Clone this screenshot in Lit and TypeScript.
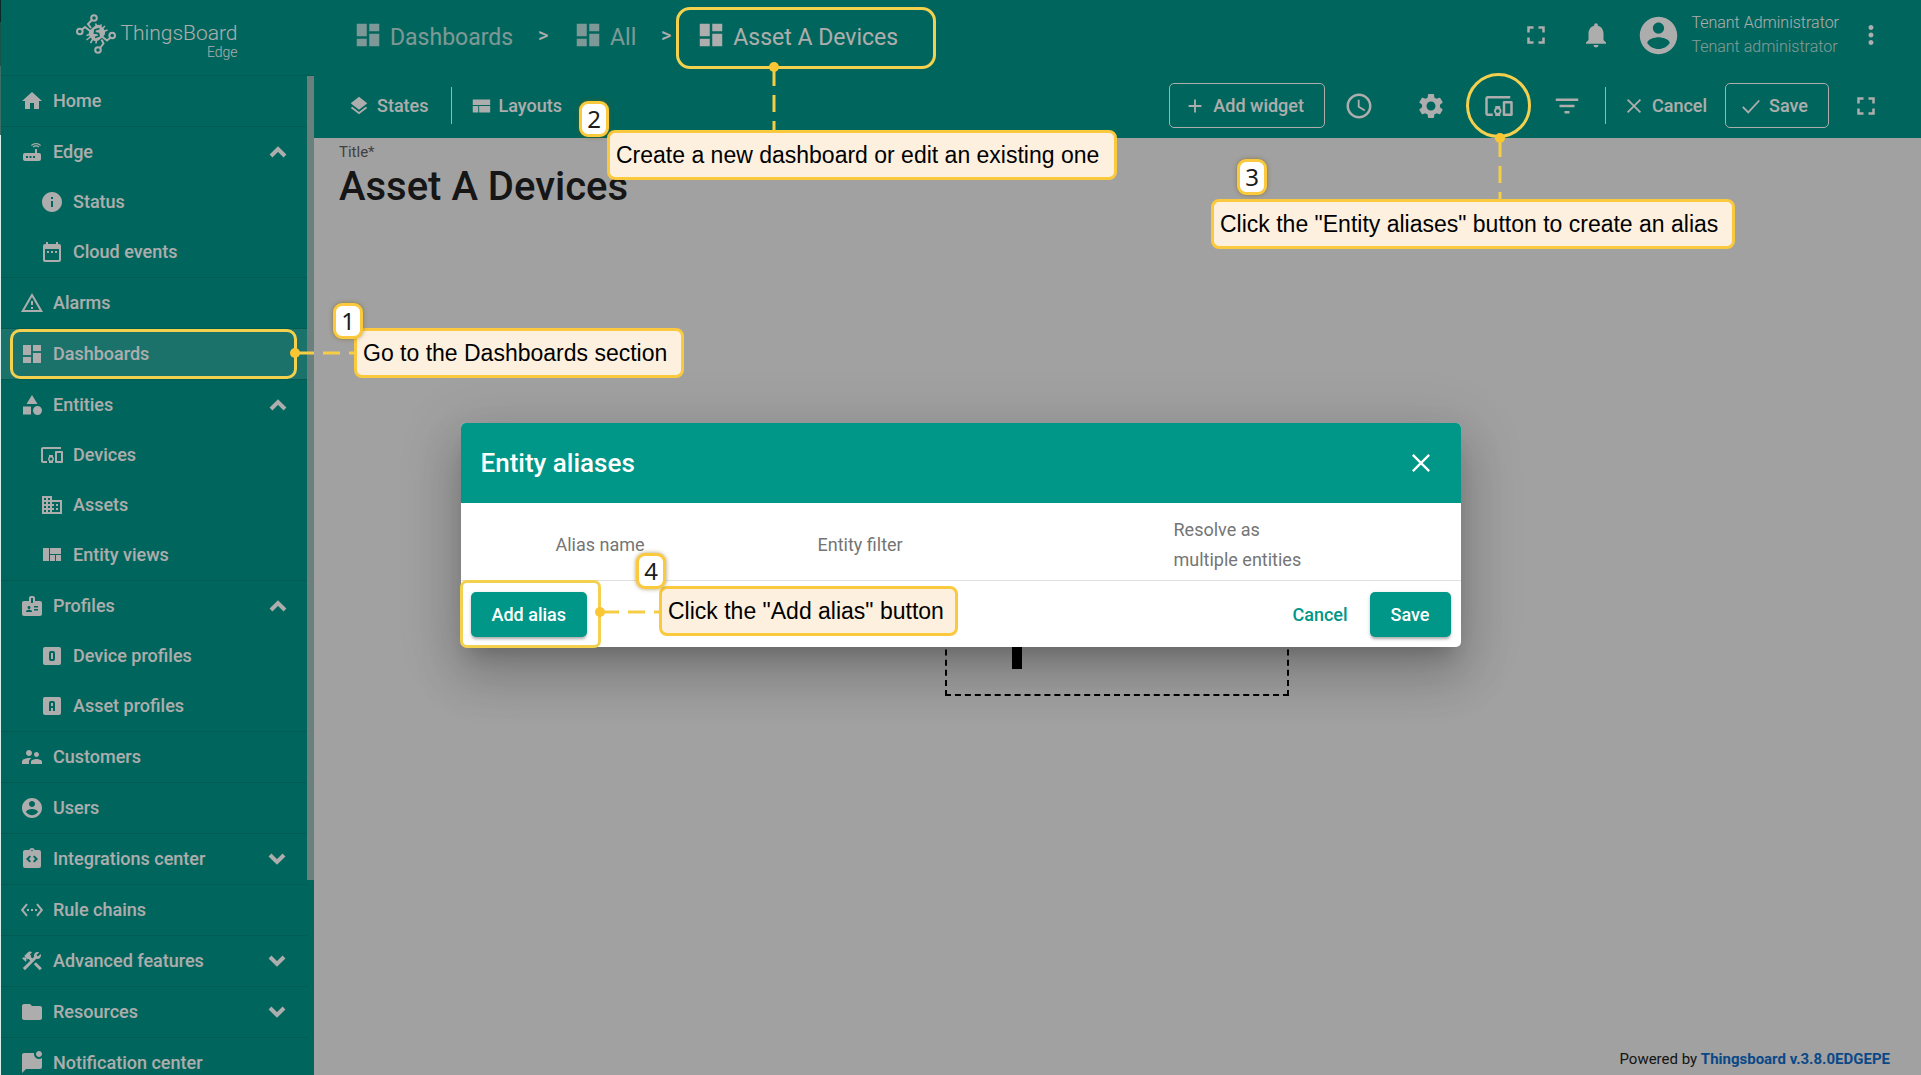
import { LitElement, html, svg, css, nothing } from "lit";
import { customElement, property } from "lit/decorators.js";
import { styleMap } from "lit/directives/style-map.js";

const stroke = (d: string, w = 2) =>
  svg`<path d=${d} fill="none" stroke="currentColor" stroke-width=${w} />`;
const fill = (d: string) => svg`<path d=${d} fill="currentColor" fill-rule="evenodd" />`;

const BOX = "M5 3h14a2 2 0 0 1 2 2v14a2 2 0 0 1-2 2H5a2 2 0 0 1-2-2V5a2 2 0 0 1 2-2z";

const ICONS: Record<string, unknown> = {
  home: fill("M10 20v-6h4v6h5v-8h3L12 3 2 12h3v8z"),
  router: fill("M20.2 5.9l.8-.8C19.6 3.7 17.8 3 16 3s-3.6.7-5 2.1l.8.8C13 4.8 14.5 4.2 16 4.2s3 .6 4.2 1.7zm-.9.8c-.9-.9-2.1-1.4-3.3-1.4s-2.4.5-3.3 1.4l.8.8c.7-.7 1.6-1 2.5-1 .9 0 1.8.3 2.5 1l.8-.8zM19 13h-2V9h-2v4H5c-1.1 0-2 .9-2 2v4c0 1.1.9 2 2 2h14c1.1 0 2-.9 2-2v-4c0-1.1-.9-2-2-2zM8 18H6v-2h2v2zm3.5 0h-2v-2h2v2zm3.5 0h-2v-2h2v2z"),
  info: fill("M12 2C6.48 2 2 6.48 2 12s4.48 10 10 10 10-4.48 10-10S17.52 2 12 2zm1 15h-2v-6h2v6zm0-8h-2V7h2v2z"),
  date: fill("M9 11H7v2h2v-2zm4 0h-2v2h2v-2zm4 0h-2v2h2v-2zm2-7h-1V2h-2v2H8V2H6v2H5c-1.11 0-1.99.9-1.99 2L3 20c0 1.1.89 2 2 2h14c1.1 0 2-.9 2-2V6c0-1.1-.9-2-2-2zm0 16H5V9h14v11z"),
  alarm: fill("M12 5.99L19.53 19H4.47L12 5.99M12 2L1 21h22L12 2zm1 14h-2v2h2v-2zm0-6h-2v4h2v-4z"),
  dashboard: fill("M3 13h8V3H3v10zm0 8h8v-6H3v6zm10 0h8V11h-8v10zm0-18v6h8V3h-8z"),
  category: fill("M12 2l-5.5 9h11zM17.5 13a4.5 4.5 0 1 0 0 9 4.5 4.5 0 0 0 0-9zM3 13.5h8v8H3z"),
  devices: fill("M3 6h18V4H3c-1.1 0-2 .9-2 2v12c0 1.1.9 2 2 2h4v-2H3V6zm10 6H9v1.78c-.61.55-1 1.33-1 2.22s.39 1.67 1 2.22V20h4v-1.78c.61-.55 1-1.34 1-2.22s-.39-1.67-1-2.22V12zm-2 5.5c-.83 0-1.5-.67-1.5-1.5s.67-1.5 1.5-1.5 1.5.67 1.5 1.5-.67 1.5-1.5 1.5zM22 8h-6c-.5 0-1 .5-1 1v10c0 .5.5 1 1 1h6c.5 0 1-.5 1-1V9c0-.5-.5-1-1-1zm-1 10h-4v-8h4v8z"),
  domain: fill("M12 7V3H2v18h20V7H12zM6 19H4v-2h2v2zm0-4H4v-2h2v2zm0-4H4V9h2v2zm0-4H4V5h2v2zm4 12H8v-2h2v2zm0-4H8v-2h2v2zm0-4H8V9h2v2zm0-4H8V5h2v2zm10 12h-8v-2h2v-2h-2v-2h2v-2h-2V9h8v10zm-2-8h-2v2h2v-2zm0 4h-2v2h2v-2z"),
  quilt: fill("M10 18h5v-6h-5v6zm-7 0h6V5H3v13zm13 0h5v-6h-5v6zM10 5v6h11V5H10z"),
  layout: fill("M3 19h6v-7H3v7zm7 0h12v-7H10v7zM3 5v6h19V5H3z"),
  badge: fill("M20 7h-5V4c0-1.1-.9-2-2-2h-2c-1.1 0-2 .9-2 2v3H4c-1.1 0-2 .9-2 2v11c0 1.1.9 2 2 2h16c1.1 0 2-.9 2-2V9c0-1.1-.9-2-2-2zM9 12c.83 0 1.5.67 1.5 1.5S9.83 15 9 15s-1.5-.67-1.5-1.5S8.17 12 9 12zm3 6H6v-.75c0-1 2-1.5 3-1.5s3 .5 3 1.5V18zm1-9h-2V4h2v5zm5 7.5h-4V15h4v1.5zm0-3h-4V12h4v1.5z"),
  deviceProfile: svg`${fill(BOX)}<rect x="10" y="8" width="4" height="8" rx="1" fill="none" stroke="#009688" stroke-width="2" />`,
  assetProfile: svg`${fill(BOX)}<path d="M10 17V9a1 1 0 0 1 1-1h2a1 1 0 0 1 1 1v8M10 13h4" fill="none" stroke="#009688" stroke-width="2" />`,
  customers: fill("M16.5 12c1.38 0 2.49-1.12 2.49-2.5S17.88 7 16.5 7C15.12 7 14 8.12 14 9.5s1.12 2.5 2.5 2.5zM9 11c1.66 0 2.99-1.34 2.99-3S10.66 5 9 5C7.34 5 6 6.34 6 8s1.34 3 3 3zm7.5 3c-1.83 0-5.5.92-5.5 2.75V19h11v-2.25c0-1.83-3.67-2.75-5.5-2.75zM9 13c-2.33 0-7 1.17-7 3.5V19h7v-2.25c0-.85.33-2.34 2.37-3.47C10.5 13.1 9.66 13 9 13z"),
  account: fill("M12 2C6.48 2 2 6.48 2 12s4.48 10 10 10 10-4.48 10-10S17.52 2 12 2zm0 3c1.66 0 3 1.34 3 3s-1.34 3-3 3-3-1.34-3-3 1.34-3 3-3zm0 14.2c-2.5 0-4.71-1.28-6-3.22.03-1.99 4-3.08 6-3.08 1.99 0 5.97 1.09 6 3.08-1.29 1.94-3.5 3.22-6 3.22z"),
  integration: fill("M19 3h-4.18C14.4 1.84 13.3 1 12 1s-2.4.84-2.82 2H5c-1.1 0-2 .9-2 2v14c0 1.1.9 2 2 2h14c1.1 0 2-.9 2-2V5c0-1.1-.9-2-2-2zm-8 11.17l-1.41 1.42L6 12l3.59-3.59L11 9.83 8.83 12 11 14.17zm1-9.92c-.41 0-.75-.34-.75-.75s.34-.75.75-.75.75.34.75.75-.34.75-.75.75zm2.41 11.34L13 14.17 15.17 12 13 9.83l1.41-1.42L18 12l-3.59 3.59z"),
  ethernet: fill("M7.77 6.76L6.23 5.48.82 12l5.41 6.52 1.54-1.28L3.42 12l4.35-5.24zM7 13h2v-2H7v2zm10-2h-2v2h2v-2zm-6 2h2v-2h-2v2zm6.77-7.52l-1.54 1.28L20.58 12l-4.35 5.24 1.54 1.28L23.18 12l-5.41-6.52z"),
  tools: fill("M13.78 15.3l6 6 2.11-2.16-6-6zM17.5 10c1.93 0 3.5-1.57 3.5-3.5 0-.58-.16-1.12-.41-1.6l-2.7 2.7-1.49-1.49 2.7-2.7c-.48-.25-1.02-.41-1.6-.41C15.57 3 14 4.57 14 6.5c0 .41.08.8.21 1.16l-1.85 1.85-1.78-1.78.71-.71-1.41-1.41L12 3.49c-1.17-1.17-3.07-1.17-4.24 0L4.22 7.03l1.41 1.41H2.81l-.71.71 3.54 3.54.71-.71V9.15l1.41 1.41.71-.71 1.78 1.78-7.41 7.41 2.12 2.12L16.34 9.79c.36.13.75.21 1.16.21z"),
  folder: fill("M10 4H4c-1.1 0-1.99.9-1.99 2L2 18c0 1.1.9 2 2 2h16c1.1 0 2-.9 2-2V8c0-1.1-.9-2-2-2h-8l-2-2z"),
  chat: fill("M22 6.98V16c0 1.1-.9 2-2 2H6l-4 4V4c0-1.1.9-2 2-2h10.1c-.06.32-.1.66-.1 1 0 2.76 2.24 5 5 5 1.13 0 2.16-.39 3-1.02zM16 3c0 1.66 1.34 3 3 3s3-1.34 3-3-1.34-3-3-3-3 1.34-3 3z"),
  up: stroke("M5 16l7-7 7 7", 4),
  down: stroke("M4 8l7 7 7-7", 4),
  layers: fill("M11.99 18.54l-7.37-5.73L3 14.07l9 7 9-7-1.63-1.27-7.38 5.74zM12 16l7.36-5.73L21 9l-9-7-9 7 1.63 1.27L12 16z"),
  fullscreen: fill("M7 14H5v5h5v-2H7v-3zm-2-4h2V7h3V5H5v5zm12 7h-3v2h5v-5h-2v3zM14 5v2h3v3h2V5h-5z"),
  bell: fill("M12 22c1.1 0 2-.9 2-2h-4c0 1.1.89 2 2 2zm6-6v-5c0-3.07-1.64-5.64-4.5-6.32V4c0-.83-.67-1.5-1.5-1.5s-1.5.67-1.5 1.5v.68C7.63 5.36 6 7.92 6 11v5l-2 2v1h16v-1l-2-2z"),
  more: fill("M12 8c1.1 0 2-.9 2-2s-.9-2-2-2-2 .9-2 2 .9 2 2 2zm0 2c-1.1 0-2 .9-2 2s.9 2 2 2 2-.9 2-2-.9-2-2-2zm0 6c-1.1 0-2 .9-2 2s.9 2 2 2 2-.9 2-2-.9-2-2-2z"),
  clock: fill("M11.99 2C6.47 2 2 6.48 2 12s4.47 10 9.99 10C17.52 22 22 17.52 22 12S17.52 2 11.99 2zM12 20c-4.42 0-8-3.58-8-8s3.58-8 8-8 8 3.58 8 8-3.58 8-8 8zm.5-13H11v6l5.25 3.15.75-1.23-4.5-2.67z"),
  gear: fill("M19.14 12.94c.04-.3.06-.61.06-.94 0-.32-.02-.64-.07-.94l2.03-1.58c.18-.14.23-.41.12-.61l-1.92-3.32c-.12-.22-.37-.29-.59-.22l-2.39.96c-.5-.38-1.03-.7-1.62-.94l-.36-2.54c-.04-.24-.24-.41-.48-.41h-3.84c-.24 0-.43.17-.47.41l-.36 2.54c-.59.24-1.13.57-1.62.94l-2.39-.96c-.22-.08-.47 0-.59.22L2.74 8.87c-.12.21-.08.47.12.61l2.03 1.58c-.05.3-.09.63-.09.94s.02.64.07.94l-2.03 1.58c-.18.14-.23.41-.12.61l1.92 3.32c.12.22.37.29.59.22l2.39-.96c.5.38 1.03.7 1.62.94l.36 2.54c.05.24.24.41.48.41h3.84c.24 0 .44-.17.47-.41l.36-2.54c.59-.24 1.13-.56 1.62-.94l2.39.96c.22.08.47 0 .59-.22l1.92-3.32c.12-.22.07-.47-.12-.61l-2.01-1.58zM12 15.6c-1.98 0-3.6-1.62-3.6-3.6s1.62-3.6 3.6-3.6 3.6 1.62 3.6 3.6-1.62 3.6-3.6 3.6z"),
  filter: fill("M10 18h4v-2h-4v2zM3 6v2h18V6H3zm3 7h12v-2H6v2z"),
  plus: stroke("M12 5v14M5 12h14", 2),
  close: stroke("M5 5l14 14M19 5L5 19", 2),
  check: stroke("M3 13l6 6L21 6", 2),
};

@customElement("tb-icon")
class TbIcon extends LitElement {
  @property() name = "";
  static styles = css`
    :host { display: inline-flex; flex: none; width: 24px; height: 24px; }
    .glyph { width: 100%; height: 100%; display: block; }
  `;
  render() {
    return html`<svg class="glyph" viewBox="0 0 24 24" aria-hidden="true">${ICONS[this.name] ?? nothing}</svg>`;
  }
}

interface Item { label: string; icon: string; active?: boolean; toggle?: "up" | "down"; children?: Item[]; }

const MENU: Item[] = [
  { label: "Home", icon: "home" },
  { label: "Edge", icon: "router", toggle: "up", children: [
    { label: "Status", icon: "info" },
    { label: "Cloud events", icon: "date" },
  ] },
  { label: "Alarms", icon: "alarm" },
  { label: "Dashboards", icon: "dashboard", active: true },
  { label: "Entities", icon: "category", toggle: "up", children: [
    { label: "Devices", icon: "devices" },
    { label: "Assets", icon: "domain" },
    { label: "Entity views", icon: "quilt" },
  ] },
  { label: "Profiles", icon: "badge", toggle: "up", children: [
    { label: "Device profiles", icon: "deviceProfile" },
    { label: "Asset profiles", icon: "assetProfile" },
  ] },
  { label: "Customers", icon: "customers" },
  { label: "Users", icon: "account" },
  { label: "Integrations center", icon: "integration", toggle: "down" },
  { label: "Rule chains", icon: "ethernet" },
  { label: "Advanced features", icon: "tools", toggle: "down" },
  { label: "Resources", icon: "folder", toggle: "down" },
  { label: "Notification center", icon: "chat" },
];

@customElement("tb-sidebar")
class TbSidebar extends LitElement {
  static styles = css`
    :host { display: flex; flex-direction: column; width: 314px; flex: none; background: #009688; color: #fff; overflow: hidden; }
    .brand { flex: none; height: 76px; box-sizing: border-box; border-bottom: 1px solid #00867a; display: flex; align-items: center; justify-content: center; gap: 4px; padding-bottom: 8px; }
    .mark { width: 40px; height: 40px; flex: none; }
    .name { display: flex; flex-direction: column; align-items: flex-end; font-weight: 300; padding-top: 12px; }
    .big { font-size: 21px; line-height: 24px; }
    .small { font-size: 14px; line-height: 14px; }
    .body { flex: 1; min-height: 0; display: flex; overflow: hidden; }
    .list { flex: 1; margin: 0; padding: 0; list-style: none; }
    .sub { margin: 0; padding: 0; list-style: none; }
    .group { border-bottom: 1px solid #00867a; }
    .row { box-sizing: border-box; width: 100%; height: 50px; display: flex; align-items: center; gap: 9px; padding: 0 17px 0 20px; border: 0; background: none; color: inherit; font: 500 18px/24px Roboto, sans-serif; text-align: left; text-decoration: none; }
    .child { padding-left: 40px; }
    .active { background: #28a99d; }
    .text { flex: 1; }
    .bar { width: 7px; flex: none; }
    .thumb { height: 804px; max-height: 100%; background: #9cbdb9; }
  `;
  row(i: Item, child = false) {
    const cls = `row ${child ? "child" : ""} ${i.active ? "active" : ""}`;
    const inner = html`<tb-icon name=${i.icon}></tb-icon><span class="text">${i.label}</span>`;
    return i.toggle
      ? html`<button class=${cls} aria-expanded=${i.toggle === "up"}>${inner}<tb-icon name=${i.toggle}></tb-icon></button>`
      : html`<a class=${cls} href="#">${inner}</a>`;
  }
  render() {
    return html`
      <div class="brand">
        <svg class="mark" viewBox="0 0 40 40" fill="none" stroke="#fff" stroke-width="2" aria-hidden="true">
          <circle cx="18" cy="4" r="2.800" /><circle cx="3.800" cy="17.500" r="2.800" />
          <circle cx="36.200" cy="21.500" r="2.800" /><circle cx="22" cy="36" r="2.800" />
          <path d="M16 6l-4 4 3 4M6 15.500l3-2.500 5 4M24.500 33.500l3-4-2-4M34 24l-3 2.500-5-4" />
          <path d="M19.500 9.500l1.500 3M25.500 10.500l-2 3M29 12l-4 4M31.500 16l-4 1.500M10.500 21.500l4-1.500M10.500 26l5-4M14.500 29l3-5M20 29.500l.5-4" stroke-width="1.600" />
          <rect x="13.200" y="12.200" width="15.500" height="13.500" rx="5" transform="rotate(-42 21 19)" fill="#fff" stroke="none" />
          <path d="M23.500 14.500l-4.500 1.500-.5 3 4 .5.500 2.500-4 1.500" stroke="#009688" stroke-width="1.800" />
        </svg>
        <div class="name"><span class="big">ThingsBoard</span><span class="small">Edge</span></div>
      </div>
      <div class="body">
        <ul class="list">
          ${MENU.map((i) => html`<li class="group">${this.row(i)}
            ${i.children ? html`<ul class="sub">${i.children.map((c) => html`<li>${this.row(c, true)}</li>`)}</ul>` : nothing}
          </li>`)}
        </ul>
        <div class="bar"><div class="thumb"></div></div>
      </div>`;
  }
}

@customElement("tb-header")
class TbHeader extends LitElement {
  static styles = css`
    :host { display: block; background: #009688; color: #fff; }
    .top { height: 75px; display: flex; align-items: center; padding: 0 20px 5px 39px; box-sizing: border-box; }
    .crumbs { display: flex; align-items: center; flex: 1; margin: 0; padding: 0; list-style: none; font-size: 23px; line-height: 24px; }
    .crumb { display: flex; align-items: center; gap: 7px; color: inherit; text-decoration: none; opacity: 0.72; }
    .crumb tb-icon { width: 30px; height: 30px; }
    .crumb span { padding-top: 6px; }
    .current { opacity: 1; }
    .sep { width: 60px; text-align: center; font-size: 20px; line-height: 24px; font-weight: 500; }
    .icon { border: 0; background: none; color: inherit; padding: 0; width: 60px; display: flex; justify-content: center; }
    .icon tb-icon { width: 30px; height: 30px; }
    .user { display: flex; align-items: center; gap: 10px; padding-left: 10px; font-weight: 300; font-size: 16px; line-height: 24px; }
    .avatar { width: 45px; height: 45px; }
    .names { padding-right: 2px; }
    .role { opacity: 0.75; }
    .tools { height: 63px; display: flex; align-items: center; padding: 0 32px 2px 34px; box-sizing: border-box; }
    .tool { display: flex; align-items: center; gap: 7px; border: 0; background: none; color: inherit; font: 500 18px/24px Roboto, sans-serif; padding: 0; height: 45px; }
    .tool tb-icon { width: 22px; height: 22px; }
    .outlined { border: 1px solid #fff; border-radius: 5px; padding: 0 20px 0 14px; }
    .line { width: 1px; height: 37px; background: #fff; }
    .left { display: flex; align-items: center; gap: 18px; flex: 1; }
    .right { display: flex; align-items: center; }
    .right .icon { width: 68px; }
    .gap { margin-right: 4px; }
    .right .cancel { padding: 0 18px 0 17px; }
    .right .end { width: 60px; padding-left: 14px; }
  `;
  render() {
    return html`
      <div class="top">
        <nav class="crumbs">
          <a class="crumb" href="#"><tb-icon name="dashboard"></tb-icon><span>Dashboards</span></a>
          <div class="sep">&gt;</div>
          <a class="crumb" href="#"><tb-icon name="dashboard"></tb-icon><span>All</span></a>
          <div class="sep">&gt;</div>
          <a class="crumb current" href="#"><tb-icon name="dashboard"></tb-icon><span>Asset A Devices</span></a>
        </nav>
        <button class="icon" aria-label="Fullscreen"><tb-icon name="fullscreen"></tb-icon></button>
        <button class="icon" aria-label="Notifications"><tb-icon name="bell"></tb-icon></button>
        <div class="user">
          <tb-icon class="avatar" name="account"></tb-icon>
          <div class="names"><div>Tenant Administrator</div><div class="role">Tenant administrator</div></div>
        </div>
        <button class="icon" aria-label="User menu"><tb-icon name="more"></tb-icon></button>
      </div>
      <div class="tools">
        <div class="left">
          <button class="tool gap"><tb-icon name="layers"></tb-icon>States</button>
          <span class="line"></span>
          <button class="tool"><tb-icon name="layout"></tb-icon>Layouts</button>
        </div>
        <div class="right">
          <button class="tool outlined"><tb-icon name="plus"></tb-icon>Add widget</button>
          <button class="icon gap" aria-label="Time window"><tb-icon name="clock"></tb-icon></button>
          <button class="icon" aria-label="Settings"><tb-icon name="gear"></tb-icon></button>
          <button class="icon" aria-label="Entity aliases"><tb-icon name="devices"></tb-icon></button>
          <button class="icon gap" aria-label="Filters"><tb-icon name="filter"></tb-icon></button>
          <span class="line"></span>
          <button class="tool cancel"><tb-icon name="close"></tb-icon>Cancel</button>
          <button class="tool outlined"><tb-icon name="check"></tb-icon>Save</button>
          <button class="icon end" aria-label="Expand"><tb-icon name="fullscreen"></tb-icon></button>
        </div>
      </div>`;
  }
}

@customElement("tb-alias-dialog")
class TbAliasDialog extends LitElement {
  static styles = css`
    :host { display: block; width: 1000px; max-width: 90%; background: #fff; border-radius: 5px; box-shadow: 0 14px 19px -9px rgba(0, 0, 0, 0.2), 0 30px 48px 4px rgba(0, 0, 0, 0.14), 0 11px 58px 10px rgba(0, 0, 0, 0.12); }
    .head { height: 80px; box-sizing: border-box; padding: 0 26px 0 20px; display: flex; align-items: center; justify-content: space-between; background: #009688; color: #fff; border-radius: 5px 5px 0 0; }
    .title { margin: 0; font-size: 26px; line-height: 32px; font-weight: 500; }
    .close { border: 0; background: none; color: inherit; padding: 0; display: flex; }
    .close tb-icon { width: 28px; height: 28px; }
    .grid { width: 100%; border-collapse: collapse; table-layout: fixed; }
    .grid th { height: 77px; box-sizing: border-box; padding: 6px 0 0; text-align: left; vertical-align: middle; font-weight: 400; font-size: 18px; line-height: 30px; color: #757575; }
    .c1 { width: 95px; }
    .c2 { width: 262px; }
    .c3 { width: 356px; }
    .narrow { display: block; width: 150px; }
    .foot { border-top: 1px solid #e0e0e0; padding: 11px 10px 10px; display: flex; align-items: center; gap: 6px; }
    .btn { height: 45px; padding: 0 21px; border: 0; border-radius: 5px; background: #009688; color: #fff; font: 500 18px/24px Roboto, sans-serif; box-shadow: 0 3px 3px -1px rgba(0, 0, 0, 0.25), 0 1px 4px rgba(0, 0, 0, 0.15); }
    .flat { background: none; color: #009688; box-shadow: none; padding: 0 16px; margin-left: auto; }
  `;
  render() {
    return html`
      <div class="head">
        <h2 class="title">Entity aliases</h2>
        <button class="close" aria-label="Close"><tb-icon name="close"></tb-icon></button>
      </div>
      <table class="grid">
        <colgroup><col class="c1" /><col class="c2" /><col class="c3" /><col /></colgroup>
        <thead><tr><td></td><th>Alias name</th><th>Entity filter</th><th><span class="narrow">Resolve as multiple entities</span></th></tr></thead>
      </table>
      <div class="foot">
        <button class="btn">Add alias</button>
        <button class="btn flat">Cancel</button>
        <button class="btn">Save</button>
      </div>`;
  }
}

type Box = [number, number, number, number];
interface Step { n: number; text: string; badge: Box; note: Box; ring: Box; radius: number; dot: [number, number]; end: [number, number]; }

const STEPS: Step[] = [
  { n: 1, text: "Go to the Dashboards section", badge: [333, 303, 30, 36], note: [354, 328, 330, 50], ring: [10, 329, 287, 50], radius: 10, dot: [295, 353], end: [355, 353] },
  { n: 2, text: "Create a new dashboard or edit an existing one", badge: [579, 101, 30, 36], note: [607, 130, 510, 50], ring: [676, 7, 260, 62], radius: 14, dot: [774, 67], end: [774, 131] },
  { n: 3, text: "Click the \"Entity aliases\" button to create an alias", badge: [1237, 159, 30, 36], note: [1211, 199, 524, 50], ring: [1466, 73, 65, 65], radius: 33, dot: [1500, 138], end: [1500, 200] },
  { n: 4, text: "Click the \"Add alias\" button", badge: [636, 553, 30, 36], note: [659, 586, 299, 50], ring: [460, 580, 141, 68], radius: 7, dot: [600, 612], end: [660, 612] },
];

const place = ([x, y, w, h]: Box, extra = {}) =>
  styleMap({ left: `${x}px`, top: `${y}px`, width: `${w}px`, height: `${h}px`, ...extra });

@customElement("tb-guide")
class TbGuide extends LitElement {
  static styles = css`
    :host { display: block; position: absolute; inset: 0; pointer-events: none; }
    .ring, .note, .badge { position: absolute; box-sizing: border-box; border: 3px solid #fbc93d; }
    .ring { border-color: #f3d14f; }
    .note { border-radius: 8px; background: #fdf0df; color: #000; display: flex; align-items: center; padding: 0 0 0 6px; font: 400 23px/28px "Liberation Sans", sans-serif; white-space: nowrap; }
    .badge { border-radius: 9px; background: #fff; color: #1c1c1c; display: flex; align-items: center; justify-content: center; font: 400 24px/28px "Noto Sans", sans-serif; box-shadow: 0 0 4px rgba(120, 90, 0, 0.6); }
    .wires { position: absolute; inset: 0; width: 100%; height: 100%; }
  `;
  render() {
    return html`
      ${STEPS.map((s) => html`<div class="ring" style=${place(s.ring, { borderRadius: `${s.radius}px` })}></div>`)}
      <svg class="wires" aria-hidden="true">
        ${STEPS.map((s) => svg`
          <line x1=${s.dot[0]} y1=${s.dot[1]} x2=${s.end[0]} y2=${s.end[1]} stroke="#f6ce46" stroke-width="3" stroke-dasharray="17 9" stroke-dashoffset="-2" />
          <circle cx=${s.dot[0]} cy=${s.dot[1]} r="5" fill="#fbc634" />`)}
      </svg>
      ${STEPS.map((s) => html`
        <div class="note" style=${place(s.note)}>${s.text}</div>
        <div class="badge" style=${place(s.badge)}>${s.n}</div>`)}`;
  }
}

@customElement("app-root")
class AppRoot extends LitElement {
  static styles = css`
    :host { display: block; position: relative; height: 100vh; overflow: hidden; font-family: Roboto, sans-serif; background: #ededed; }
    .shell { display: flex; height: 100%; }
    .main { flex: 1; min-width: 0; display: flex; flex-direction: column; }
    .title { padding: 1px 25px 0; display: flex; flex-direction: column; }
    .label { font-size: 15px; line-height: 26px; color: #616161; }
    .field { border: 0; padding: 0; background: none; font: 500 40px/44px Roboto, sans-serif; color: #212121; width: 100%; }
    .canvas { flex: 1; display: flex; align-items: center; justify-content: center; padding: 0 2px 42px 0; }
    .drop { width: 344px; height: 178px; box-sizing: border-box; border: 2px dashed #000; background: none; display: flex; align-items: center; padding: 0 0 0 34px; }
    .cross { width: 72px; height: 124px; }
    .foot { padding: 0 31px 4px; text-align: right; font-size: 15px; line-height: 24px; color: #212121; }
    .link { color: #106cc8; font-weight: 700; text-decoration: none; }
    .veil { position: absolute; inset: 0; display: flex; align-items: center; justify-content: center; background: rgba(0, 0, 0, 0.32); padding-bottom: 5px; }
    .edge { position: absolute; inset: 0 auto 0 0; width: 1px; background: linear-gradient(#0a2b28 22px, #17544c 22px 66px, #3d6e66 66px 135px, #d8efec 135px); }
  `;
  render() {
    return html`
      <div class="shell">
        <tb-sidebar></tb-sidebar>
        <main class="main">
          <tb-header></tb-header>
          <div class="title">
            <label class="label" for="title">Title*</label>
            <input class="field" id="title" value="Asset A Devices" />
          </div>
          <div class="canvas">
            <button class="drop" aria-label="Add widget">
              <svg class="cross" viewBox="0 0 72 124" aria-hidden="true"><path d="M36 0v124M0 62h72" stroke="#000" stroke-width="10" /></svg>
            </button>
          </div>
          <div class="foot">Powered by <a class="link" href="#">Thingsboard v.3.8.0EDGEPE</a></div>
        </main>
      </div>
      <div class="veil"><tb-alias-dialog role="dialog" aria-label="Entity aliases"></tb-alias-dialog></div>
      <div class="edge"></div>
      <tb-guide></tb-guide>`;
  }
}
